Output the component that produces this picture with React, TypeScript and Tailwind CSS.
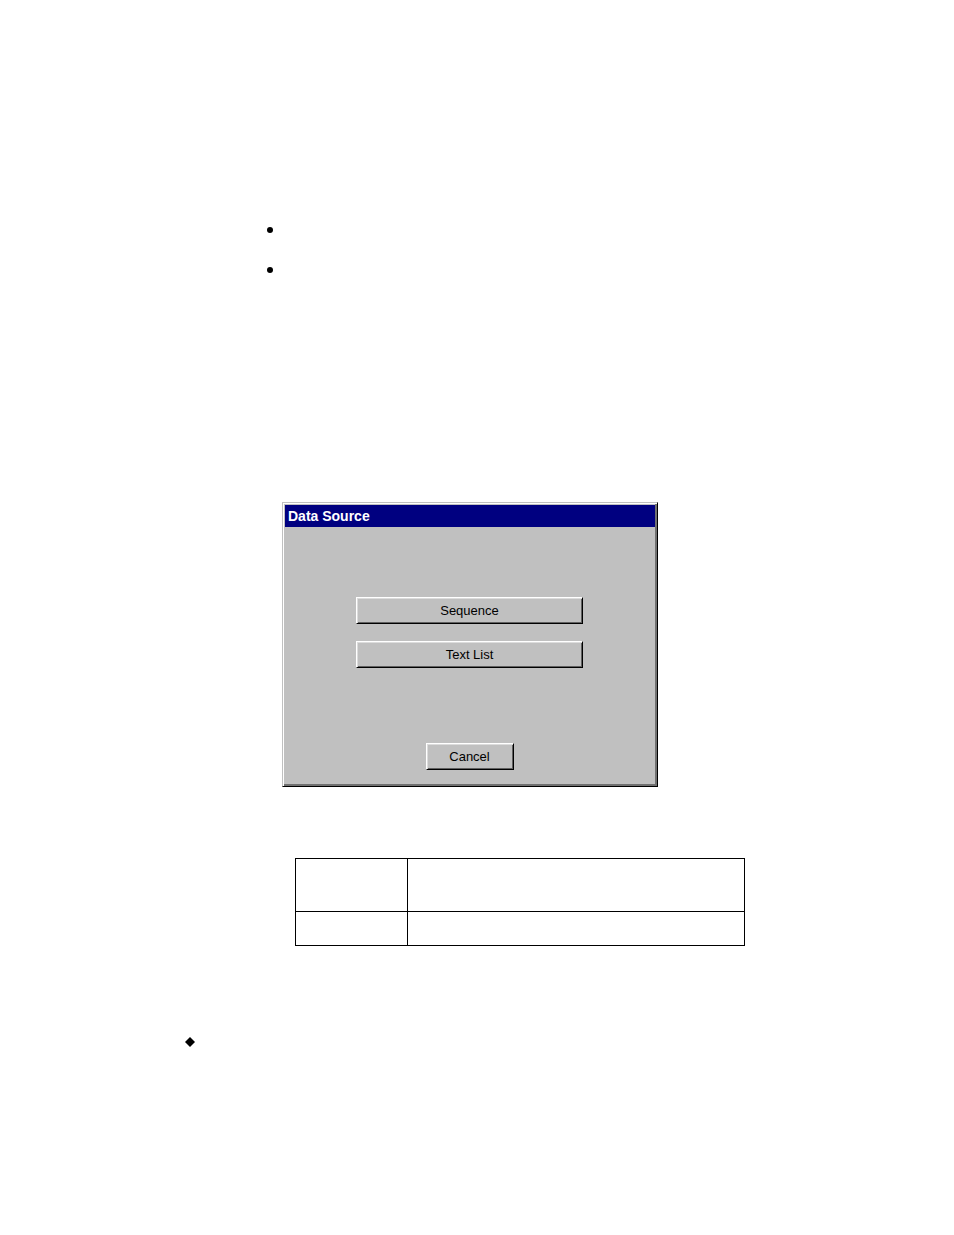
import type { ReactNode } from 'react';

/**
 * Raised push button with the classic two-step bevel.
 */
function BevelButton({ className, children }: { className: string; children: ReactNode }) {
  return (
    <button
      type="button"
      className={`
        h-[27px] border
        border-t-white border-l-white border-r-black border-b-black
        bg-[#c0c0c0] text-[13px] leading-4 text-black
        shadow-[inset_1px_1px_0_#dcdcdc,inset_-1px_-1px_0_#606060]
        ${className}
      `}
    >
      {children}
    </button>
  );
}

function DataSourceDialog() {
  return (
    <section
      role="dialog"
      aria-labelledby="dialog-title"
      className="
        w-full max-w-[376px] border
        border-t-[#c0c0c0] border-l-[#c0c0c0] border-r-black border-b-black
        bg-[#c0c0c0] p-[2px]
        shadow-[inset_1px_1px_0_#ffffff,inset_-2px_-2px_0_#707070]
      "
    >
      <h1
        id="dialog-title"
        className="bg-[#000080] px-[3px] text-sm leading-[22px] font-bold text-white"
      >
        Data Source
      </h1>
      <div className="flex flex-col items-center pt-[70px] pr-[72px] pb-[14px] pl-[71px]">
        <BevelButton className="w-full">Sequence</BevelButton>
        <BevelButton className="mt-[17px] w-full">Text List</BevelButton>
        <BevelButton className="mt-[75px] w-[88px]">Cancel</BevelButton>
      </div>
    </section>
  );
}

export default function App() {
  return (
    <main className="min-h-screen bg-white pt-[227px] pb-12 font-['Liberation_Sans',Arial,sans-serif]">
      {/* Bullets */}
      <ul className="flex flex-col gap-[34px] pl-[267px]">
        <li className="size-1.5 rounded-full bg-black" />
        <li className="size-1.5 rounded-full bg-black" />
      </ul>

      <div className="mt-[229px] pl-[282px]">
        <DataSourceDialog />
      </div>

      {/* Empty two-column table */}
      <div className="mt-[71px] pl-[295px]">
        <table className="w-full max-w-[450px] table-fixed border-separate border-spacing-0 border-t border-l border-black">
          <tbody>
            <tr className="h-[53px]">
              <td className="w-28 border-r border-b border-black" />
              <td className="border-r border-b border-black" />
            </tr>
            <tr className="h-[34px]">
              <td className="border-r border-b border-black" />
              <td className="border-r border-b border-black" />
            </tr>
          </tbody>
        </table>
      </div>

      <div className="mt-[91px] pl-[185px]">
        <svg viewBox="0 0 10 10" className="block size-2.5" aria-hidden="true">
          <path d="M5 0 10 5 5 10 0 5Z" fill="#000" />
        </svg>
      </div>
    </main>
  );
}
